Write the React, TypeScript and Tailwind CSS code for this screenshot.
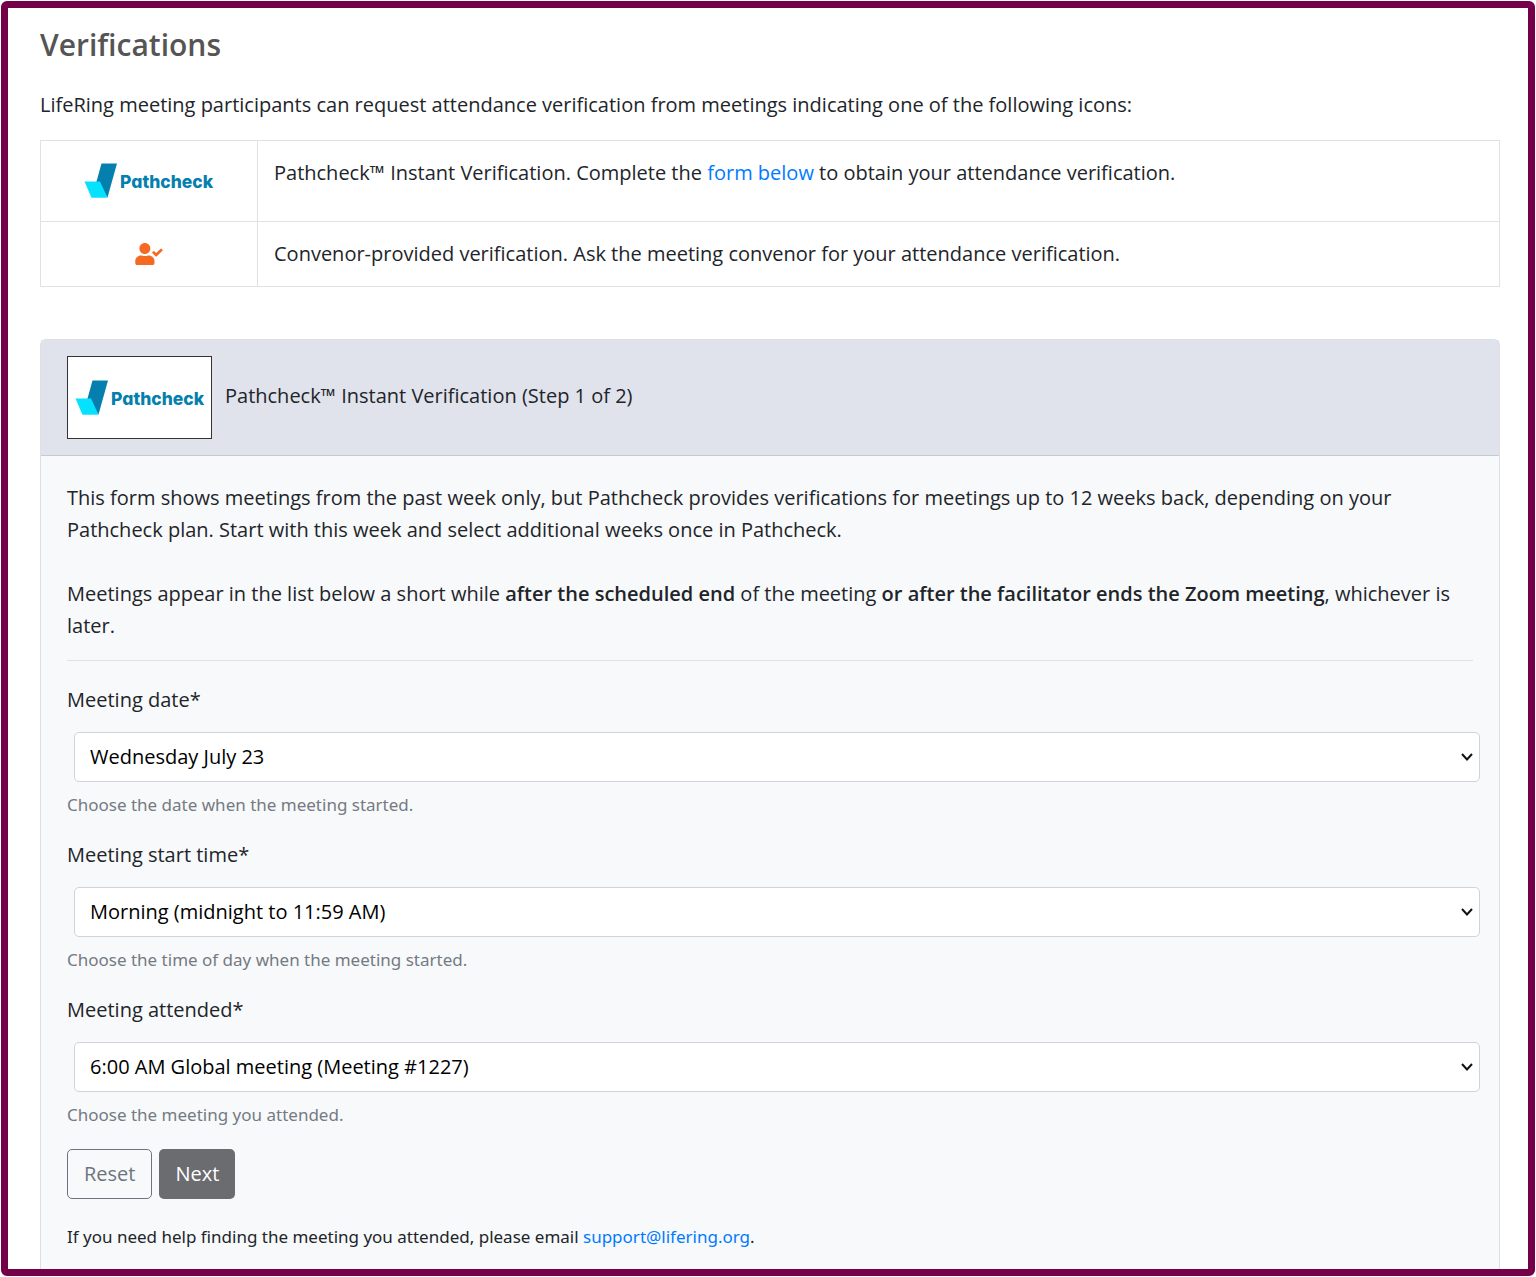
import { useId, useState } from "react";
import type { ReactNode } from "react";
import { clsx } from "clsx";

function PathcheckLogo({ className }: { className?: string }) {
  return (
    <svg viewBox="0 0 130 36" className={clsx("h-9 w-[130px]", className)} role="img" aria-label="Pathcheck">
      <path d="M17.5 0.5H33L23.5 34.5L12.5 18.5Z" fill="#0580ae" />
      <path d="M0.5 18.5H16L23.5 34.8H7.5Z" fill="#06e1ff" />
      <text
        x="36"
        y="25"
        fill="#0580ae"
        fontSize="17.5"
        fontWeight="800"
        className="font-['Inter',sans-serif] [font-feature-settings:'cv11']"
      >
        Pathcheck
      </text>
    </svg>
  );
}

function UserCheckIcon() {
  return (
    <svg viewBox="0 0 640 512" className="mx-auto h-[22px] w-7" fill="#f46a22" aria-hidden="true">
      <path d="M224 256c70.700 0 128-57.300 128-128S294.700 0 224 0 96 57.300 96 128s57.300 128 128 128zm89.600 32h-16.700c-22.200 10.200-46.900 16-72.900 16s-50.600-5.800-72.900-16h-16.700C60.200 288 0 348.200 0 422.400V464c0 26.500 21.500 48 48 48h352c26.500 0 48-21.500 48-48v-41.600c0-74.200-60.200-134.400-134.400-134.400zm323-128.400l-27.800-28.100c-4.600-4.700-12.100-4.700-16.800-.1l-104.800 104-45.500-45.800c-4.600-4.700-12.100-4.700-16.800-.1l-28.100 27.900c-4.700 4.600-4.700 12.100-.1 16.800l81.700 82.300c4.600 4.700 12.100 4.700 16.800.1l141.300-140.200c4.600-4.700 4.700-12.200.1-16.800z" />
    </svg>
  );
}

interface SelectFieldProps {
  label: string;
  help: string;
  options: string[];
}

function SelectField({ label, help, options }: SelectFieldProps) {
  const id = useId();
  const [value, setValue] = useState(options[0]);

  return (
    <div className="mb-5">
      <label htmlFor={id} className="block">
        {label}*
      </label>
      <div className="relative mt-4 ml-[7px] -mr-[7px]">
        <select
          id={id}
          value={value}
          onChange={(e) => setValue(e.target.value)}
          aria-describedby={`${id}-help`}
          className="block h-[50px] w-full appearance-none rounded-[5px] border border-[#ced4da] bg-white pr-10 pl-[15px] text-black"
        >
          {options.map((option) => (
            <option key={option}>{option}</option>
          ))}
        </select>
        <svg
          viewBox="0 0 12 8"
          className="pointer-events-none absolute top-1/2 right-[7px] h-2 w-3 -translate-y-1/2"
          fill="none"
          stroke="#111"
          strokeWidth="2"
          aria-hidden="true"
        >
          <path d="M1 1L6 6.500L11 1" />
        </svg>
      </div>
      <p id={`${id}-help`} className="mt-[9px] font-['Noto_Sans',sans-serif] text-[17px] leading-7 text-[#747b82]">
        {help}
      </p>
    </div>
  );
}

function IconRow({ icon, children }: { icon: ReactNode; children: ReactNode }) {
  return (
    <tr>
      <td className="w-[217px] border border-[#dee2e6] p-4 align-middle">{icon}</td>
      <td className="border border-[#dee2e6] p-4 align-top">{children}</td>
    </tr>
  );
}

export default function App() {
  return (
    <div className="bg-white p-px font-['Open_Sans',sans-serif] text-[20px] leading-8 text-[#212529]">
      <main className="rounded-md border-[7px] border-[#730048] pt-[17px] pr-7 pl-8">
        <h1 className="text-[30px] leading-10 font-semibold text-[#555]">Verifications</h1>
        <p className="mt-6">
          LifeRing meeting participants can request attendance verification from meetings indicating one of the
          following icons:
        </p>

        <table className="mt-[19px] w-full border-collapse">
          <tbody>
            <IconRow icon={<PathcheckLogo className="mx-auto my-1.5" />}>
              Pathcheck™ Instant Verification. Complete the{" "}
              <a href="#pathcheck-form" className="text-[#007bff]">
                form below
              </a>{" "}
              to obtain your attendance verification.
            </IconRow>
            <IconRow icon={<UserCheckIcon />}>
              Convenor-provided verification. Ask the meeting convenor for your attendance verification.
            </IconRow>
          </tbody>
        </table>

        <section id="pathcheck-form" className="mt-13 rounded-t-md border border-b-0 border-[#dcdfe3] bg-[#f8f9fb]">
          {/* Card header */}
          <header className="flex items-center gap-[13px] border-b border-[#c8cad3] bg-[#e0e2ec] px-[26px] py-4">
            <div className="flex h-[83px] w-[145px] items-center justify-center border border-[#333] bg-white">
              <PathcheckLogo />
            </div>
            <h2 className="pb-1">Pathcheck™ Instant Verification (Step 1 of 2)</h2>
          </header>

          {/* Card body */}
          <form className="px-[26px] pt-[26px] pb-[18px]" onSubmit={(e) => e.preventDefault()}>
            <p>
              This form shows meetings from the past week only, but Pathcheck provides verifications for meetings up to
              12 weeks back, depending on your Pathcheck plan. Start with this week and select additional weeks once in
              Pathcheck.
            </p>
            <p className="mt-8">
              Meetings appear in the list below a short while{" "}
              <b className="font-semibold">after the scheduled end</b> of the meeting{" "}
              <b className="font-semibold">or after the facilitator ends the Zoom meeting</b>, whichever is later.
            </p>
            <hr className="mt-[18px] mb-[23px] border-[#dfe1e4]" />

            <SelectField
              label="Meeting date"
              help="Choose the date when the meeting started."
              options={["Wednesday July 23"]}
            />
            <SelectField
              label="Meeting start time"
              help="Choose the time of day when the meeting started."
              options={["Morning (midnight to 11:59 AM)"]}
            />
            <SelectField
              label="Meeting attended"
              help="Choose the meeting you attended."
              options={["6:00 AM Global meeting (Meeting #1227)"]}
            />

            <div className="flex gap-[7px]">
              <button type="reset" className="h-[50px] rounded-[5px] border border-[#6c757d] px-4 text-[#6c757d]">
                Reset
              </button>
              <button type="submit" className="h-[50px] rounded-[5px] bg-[#6b6c6f] px-4 text-white">
                Next
              </button>
            </div>
            <p className="mt-6 font-['Noto_Sans',sans-serif] text-[17px] leading-7">
              If you need help finding the meeting you attended, please email{" "}
              <a href="mailto:support@lifering.org" className="text-[#007bff]">
                support@lifering.org
              </a>
              .
            </p>
          </form>
        </section>
      </main>
    </div>
  );
}
